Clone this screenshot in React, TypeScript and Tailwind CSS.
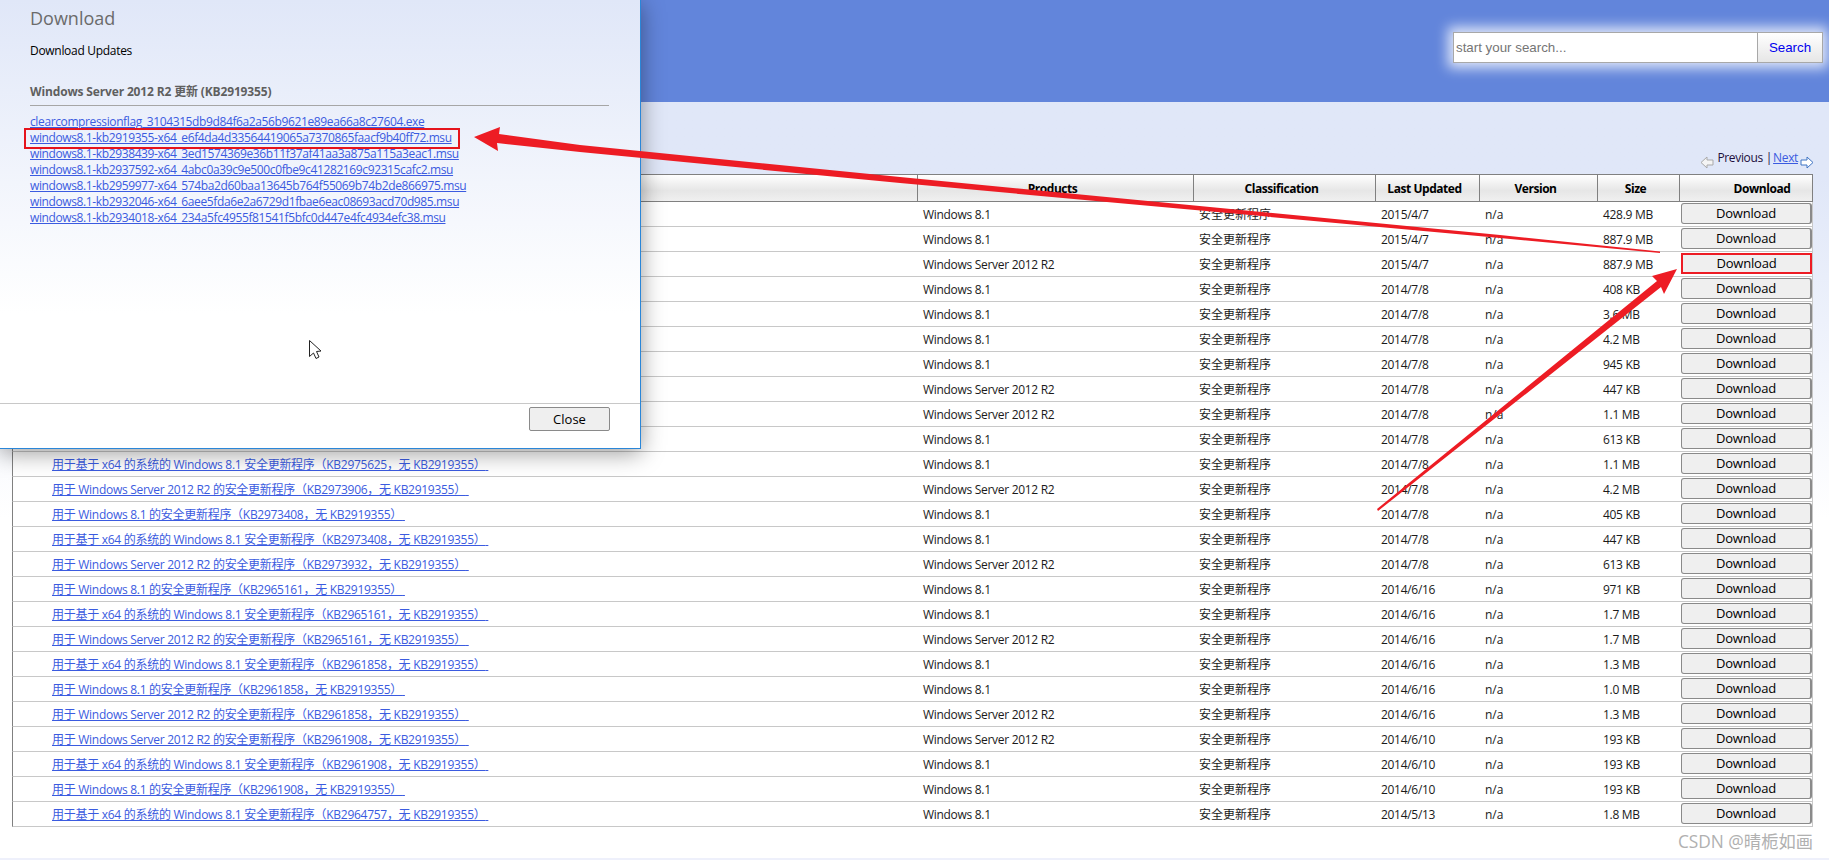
const FONT = "font-['Open_Sans','Noto_Sans_CJK_SC',sans-serif]";

type Row = { title: string; product: string; date: string; size: string };
const W81 = "Windows 8.1";
const S12 = "Windows Server 2012 R2";
const x64 = (kb: string) => `用于基于 x64 的系统的 Windows 8.1 安全更新程序（${kb}，无 KB2919355）`;
const s12 = (kb: string) => `用于 Windows Server 2012 R2 的安全更新程序（${kb}，无 KB2919355）`;
const w81 = (kb: string) => `用于 Windows 8.1 的安全更新程序（${kb}，无 KB2919355）`;

const rows: Row[] = [
  { title: "Windows 8.1 更新 (KB2919355)", product: W81, date: "2015/4/7", size: "428.9 MB" },
  { title: "用于基于 x64 的系统的 Windows 8.1 更新 (KB2919355)", product: W81, date: "2015/4/7", size: "887.9 MB" },
  { title: "Windows Server 2012 R2 更新 (KB2919355)", product: S12, date: "2015/4/7", size: "887.9 MB" },
  { title: w81("KB2976627"), product: W81, date: "2014/7/8", size: "408 KB" },
  { title: x64("KB2976627"), product: W81, date: "2014/7/8", size: "3.6 MB" },
  { title: w81("KB2973906"), product: W81, date: "2014/7/8", size: "4.2 MB" },
  { title: x64("KB2973906"), product: W81, date: "2014/7/8", size: "945 KB" },
  { title: s12("KB2973408"), product: S12, date: "2014/7/8", size: "447 KB" },
  { title: s12("KB2975625"), product: S12, date: "2014/7/8", size: "1.1 MB" },
  { title: w81("KB2973932"), product: W81, date: "2014/7/8", size: "613 KB" },
  { title: x64("KB2975625"), product: W81, date: "2014/7/8", size: "1.1 MB" },
  { title: s12("KB2973906"), product: S12, date: "2014/7/8", size: "4.2 MB" },
  { title: w81("KB2973408"), product: W81, date: "2014/7/8", size: "405 KB" },
  { title: x64("KB2973408"), product: W81, date: "2014/7/8", size: "447 KB" },
  { title: s12("KB2973932"), product: S12, date: "2014/7/8", size: "613 KB" },
  { title: w81("KB2965161"), product: W81, date: "2014/6/16", size: "971 KB" },
  { title: x64("KB2965161"), product: W81, date: "2014/6/16", size: "1.7 MB" },
  { title: s12("KB2965161"), product: S12, date: "2014/6/16", size: "1.7 MB" },
  { title: x64("KB2961858"), product: W81, date: "2014/6/16", size: "1.3 MB" },
  { title: w81("KB2961858"), product: W81, date: "2014/6/16", size: "1.0 MB" },
  { title: s12("KB2961858"), product: S12, date: "2014/6/16", size: "1.3 MB" },
  { title: s12("KB2961908"), product: S12, date: "2014/6/10", size: "193 KB" },
  { title: x64("KB2961908"), product: W81, date: "2014/6/10", size: "193 KB" },
  { title: w81("KB2961908"), product: W81, date: "2014/6/10", size: "193 KB" },
  { title: x64("KB2964757"), product: W81, date: "2014/5/13", size: "1.8 MB" },
];

const files = [
  "clearcompressionflag_3104315db9d84f6a2a56b9621e89ea66a8c27604.exe",
  "windows8.1-kb2919355-x64_e6f4da4d33564419065a7370865faacf9b40ff72.msu",
  "windows8.1-kb2938439-x64_3ed1574369e36b11f37af41aa3a875a115a3eac1.msu",
  "windows8.1-kb2937592-x64_4abc0a39c9e500c0fbe9c41282169c92315cafc2.msu",
  "windows8.1-kb2959977-x64_574ba2d60baa13645b764f55069b74b2de866975.msu",
  "windows8.1-kb2932046-x64_6aee5fda6e2a6729d1fbae6eac08693acd70d985.msu",
  "windows8.1-kb2934018-x64_234a5fc4955f81541f5bfc0d447e4fc4934efc38.msu",
];

const headers: [string, string][] = [
  ["", "w-[906px]"],
  ["Products", "w-[276px] pr-[6px]"],
  ["Classification", "w-[182px] pr-[6px]"],
  ["Last Updated", "w-[104px] pr-[6px]"],
  ["Version", "w-[118px] pr-[6px]"],
  ["Size", "w-[82px] pr-[6px]"],
  ["Download", "w-[133px] pl-[32px]"],
];

function PagerArrow({ right }: { right?: boolean }) {
  return (
    <svg width="14" height="13" viewBox="0 0 14 13" className="mt-[6px]">
      <polygon
        points={right ? "1,4 7,4 7,1 13,6.5 7,12 7,9 1,9" : "13,4 7,4 7,1 1,6.5 7,12 7,9 13,9"}
        fill={right ? "#ffffff" : "#f4f4f4"}
        stroke={right ? "#3f74c4" : "#a9a9a9"}
        strokeWidth="1"
      />
    </svg>
  );
}

const cell = "p-0 pl-[5px] pt-[1px] border-b border-[#c8c8c8]";

export default function App() {
  return (
    <div className={`relative w-[1829px] h-[860px] overflow-hidden bg-white ${FONT}`}>
      <header className="h-[102px] bg-[#6285db] flex justify-end pt-[32px] pr-[6px]">
        <div className="flex h-[31px] w-[370px] border border-[#a8a8a8] shadow-[0_0_12px_5px_rgba(255,255,255,0.8)] font-['Liberation_Sans',sans-serif] text-[13.33px]">
          <div className="flex-1 bg-white pl-[2px] leading-[30px] text-[#757575]">start your search...</div>
          <div className="w-[65px] border-l border-[#a8a8a8] bg-linear-to-b from-white to-[#e6e6e6] text-center leading-[30px] text-[#0000ee]">Search</div>
        </div>
      </header>

      <main className="h-[756px] bg-linear-to-b from-[#e0e7f8] from-10% to-white to-55% pt-[48px] pl-[12px]">
        <div className="w-[1802px] h-[24px] flex justify-end items-start text-[12px] leading-[16px] tracking-[-0.35px] text-[#20103c]">
          <PagerArrow />
          <span className="ml-[3px]">Previous</span>
          <span className="ml-[3px] mr-[1px]">|</span>
          <span className="text-[#3b5be0] underline">Next</span>
          <span className="ml-[2px] flex items-start"><PagerArrow right /></span>
        </div>
        <table className="table-fixed border-separate border-spacing-0 w-[1801px] bg-white text-[12px] text-[#1a1a1a]">
          <thead>
            <tr>
              {headers.map(([h, w], i) => (
                <th
                  key={i}
                  className={`${w} h-[28px] p-0 pt-[1px] border-t border-b border-r border-[#808080] ${i === 0 ? "border-l" : ""} bg-linear-to-b from-white via-[#e6e6e6] via-60% to-[#f0f0f0] text-center font-bold tracking-[-0.45px] text-black`}
                >
                  {h}
                </th>
              ))}
            </tr>
          </thead>
          <tbody>
            {rows.map((r, i) => (
              <tr key={i}>
                <td className="h-[25px] p-0 pl-[39px] pt-[1px] border-l border-b border-l-[#808080] border-b-[#c8c8c8] whitespace-nowrap tracking-[-0.28px]">
                  <span className="text-[#3b5be0] underline">{r.title}{"\u00a0"}</span>
                </td>
                <td className={`${cell} tracking-[-0.3px]`}>{r.product}</td>
                <td className={cell}>安全更新程序</td>
                <td className={`${cell} tracking-[-0.3px]`}>{r.date}</td>
                <td className={cell}>n/a</td>
                <td className={`${cell} tracking-[-0.3px]`}>{r.size}</td>
                <td className="p-0 pl-[1px] align-top border-b border-r border-[#c8c8c8]">
                  <button className={`mt-[1px] block w-[131px] h-[21px] bg-[#efefef] text-center text-[13px] leading-[17px] tracking-[-0.2px] text-black ${i === 2 ? "border-2 border-[#ed1c24]" : "rounded-[3px] border border-[#8a8a8a] border-r-2"}`}>
                    Download
                  </button>
                </td>
              </tr>
            ))}
          </tbody>
        </table>
      </main>
      <div className="h-[2px] bg-[#eef0fb]" />

      <div className="absolute right-[16px] top-[830px] text-[17.3px] leading-[24px] text-[#b0b0b0]">CSDN @晴栀如画</div>

      {/* modal dialog */}
      <div className="absolute left-0 top-0 w-[641px] h-[449px] flex flex-col border-r border-b border-[#2a86d8] bg-linear-to-b from-[#e0e7f8] to-white to-70% shadow-[0_4px_22px_rgba(0,0,0,0.4)]">
        <div className="flex-1 pl-[30px] pr-[31px]">
          <div className="mt-[6px] text-[18px] leading-[24px] text-[#6b6b6b]">Download</div>
          <div className="mt-[13px] text-[12px] leading-[16px] tracking-[-0.3px] text-black">Download Updates</div>
          <div className="mt-[25px] text-[12px] leading-[16px] font-bold tracking-[-0.15px] text-[#5f5f5f]">Windows Server 2012 R2 更新 (KB2919355)</div>
          <div className="mt-[5px] border-t border-[#a6a6a6]" />
          <ul className="mt-[8px]">
            {files.map((f) => (
              <li key={f} className="text-[12px] leading-[16px] tracking-[-0.38px] text-[#3b5be0] underline">{f}</li>
            ))}
          </ul>
        </div>
        <div className="h-[45px] border-t border-[#c8c8c8] flex justify-end pr-[30px] pt-[3px]">
          <button className="w-[81px] h-[24px] rounded-[2px] border border-[#8a8a8a] bg-[#efefef] text-[13px] leading-[20px] text-black">Close</button>
        </div>
      </div>

      {/* screenshot annotations */}
      <div className="absolute left-[24px] top-[128px] w-[436px] h-[21px] border-2 border-[#e5141c]" />
      <svg className="absolute left-0 top-0 pointer-events-none" width="1829" height="860" viewBox="0 0 1829 860">
        <polygon fill="#ed1c24" points="474,137 500,127 499,134 580,145 900,177 1500,235 1660,251.5 1660,253 1500,238 900,183 580,152 497,143 498,151" />
        <polygon fill="#ed1c24" points="1677,269 1652,276 1657,281 1377,509 1378,511 1661,287 1664,294" />
        <polygon fill="#ffffff" stroke="#222222" strokeWidth="1" points="309.5,340.5 309.5,356.5 313.5,353 316,358.5 319,357 316.5,351.5 321,351" />
      </svg>
    </div>
  );
}
